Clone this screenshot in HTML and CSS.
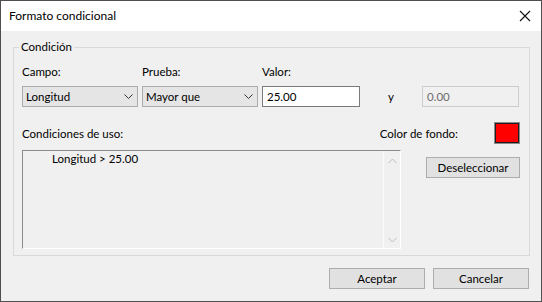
FILE: index.html
```html
<!DOCTYPE html>
<html lang="es">
<head>
  <meta charset="UTF-8">
  <title>Formato condicional</title>
  <link rel="stylesheet" href="styles.css">
</head>
<body>
  <div class="window">
    <div class="titlebar">
      <span class="title">Formato condicional</span>
      <svg class="close" width="12" height="12" viewBox="0 0 12 12">
        <path d="M1 1 L11 11 M11 1 L1 11" stroke="#111" stroke-width="1.1" fill="none"/>
      </svg>
    </div>
    <div class="content">
      <fieldset class="group">
        <legend>Condición</legend>
        <div class="fields">
          <span class="lbl">Campo:</span>
          <span class="lbl">Prueba:</span>
          <span class="lbl">Valor:</span>
          <span></span>
          <span></span>

          <div class="combo">
            <span>Longitud</span>
            <svg width="9" height="6" viewBox="0 0 9 6"><path d="M0.5 0.5 L4.5 4.5 L8.5 0.5" stroke="#333" fill="none"/></svg>
          </div>
          <div class="combo">
            <span>Mayor que</span>
            <svg width="9" height="6" viewBox="0 0 9 6"><path d="M0.5 0.5 L4.5 4.5 L8.5 0.5" stroke="#333" fill="none"/></svg>
          </div>
          <div class="textbox">25.00</div>
          <span class="and">y</span>
          <div class="textbox disabled">0.00</div>
        </div>

        <div class="row-head">
          <span>Condiciones de uso:</span>
          <div class="colour">
            <span>Color de fondo:</span>
            <div class="swatch"></div>
          </div>
        </div>

        <div class="row-list">
          <div class="listbox">
            <div class="items">
              <div>Longitud &gt; 25.00</div>
            </div>
            <div class="scrollbar">
              <svg width="9" height="6" viewBox="0 0 9 6"><path d="M0.5 5 L4.5 1 L8.5 5" stroke="#bdbdbd" fill="none"/></svg>
              <svg width="9" height="6" viewBox="0 0 9 6"><path d="M0.5 1 L4.5 5 L8.5 1" stroke="#bdbdbd" fill="none"/></svg>
            </div>
          </div>
          <button class="btn side">Deseleccionar</button>
        </div>
      </fieldset>

      <div class="actions">
        <button class="btn">Aceptar</button>
        <button class="btn">Cancelar</button>
      </div>
    </div>
  </div>
</body>
</html>
```

FILE: styles.css
```css
* {
  box-sizing: border-box;
}
body {
  margin: 0;
  font-family: Lato, "Noto Sans", sans-serif;
  font-size: 11.5px;
  color: #000;
  background: #f0f0f0;
}
.window {
  width: 542px;
  height: 302px;
  border: 1px solid #4f4f4f;
  background: #f0f0f0;
  display: flex;
  flex-direction: column;
}
.titlebar {
  height: 30px;
  background: #fff;
  display: flex;
  align-items: center;
  justify-content: space-between;
  padding: 0 10px 0 8px;
}
.title {
  font-size: 12px;
  line-height: 16px;
}
.content {
  padding: 8px 11px 0 12px;
}
.group {
  margin: 0;
  border: 1px solid #d9d9d9;
  padding: 9px 9px 6px 8px;
  min-width: 0;
}
.group legend {
  padding: 0 2px;
  margin-left: -3px;
  line-height: 16px;
}
.fields {
  display: grid;
  grid-template-columns: 116px 116px 98px 54px 97px;
  column-gap: 4px;
  row-gap: 6px;
}
.lbl {
  line-height: 16px;
}
.combo {
  height: 21px;
  background: #e5e5e5;
  border: 1px solid #acacac;
  display: flex;
  align-items: center;
  justify-content: space-between;
  padding: 0 4px 0 3px;
}
.textbox {
  height: 21px;
  background: #fff;
  border: 1px solid #7a7a7a;
  padding: 0 4px;
  line-height: 19px;
}
.textbox.disabled {
  background: #f0f0f0;
  border-color: #cccccc;
  color: #6d6d6d;
}
.and {
  text-align: center;
  line-height: 21px;
}
.row-head {
  margin-top: 15px;
  height: 22px;
  display: flex;
  align-items: center;
  justify-content: space-between;
}
.colour {
  display: flex;
  align-items: center;
  gap: 36px;
}
.swatch {
  width: 26px;
  height: 22px;
  background: #ff0000;
  border: 1px solid #8a8a8a;
  box-shadow: inset 0 0 0 1px #1e1e1e;
}
.row-list {
  margin-top: 6px;
  display: flex;
  justify-content: space-between;
  align-items: flex-start;
}
.listbox {
  width: 379px;
  height: 99px;
  border-top: 1px solid #8c8c8c;
  border-left: 1px solid #8c8c8c;
  border-right: 1px solid #fff;
  border-bottom: 1px solid #fff;
  display: flex;
}
.items {
  flex: 1;
  padding: 1px 0 0 29px;
  line-height: 14px;
}
.scrollbar {
  width: 17px;
  border-left: 1px solid #fbfbfb;
  display: flex;
  flex-direction: column;
  justify-content: space-between;
  align-items: center;
  padding: 7px 0 5px;
}
.btn {
  font: inherit;
  color: #000;
  height: 21px;
  width: 96px;
  background: #e1e1e1;
  border: 1px solid #adadad;
  padding: 0;
}
.btn.side {
  width: 94px;
  margin-top: 7px;
}
.actions {
  margin-top: 12px;
  display: flex;
  justify-content: flex-end;
  gap: 8px;
  padding-right: 1px;
}
```
